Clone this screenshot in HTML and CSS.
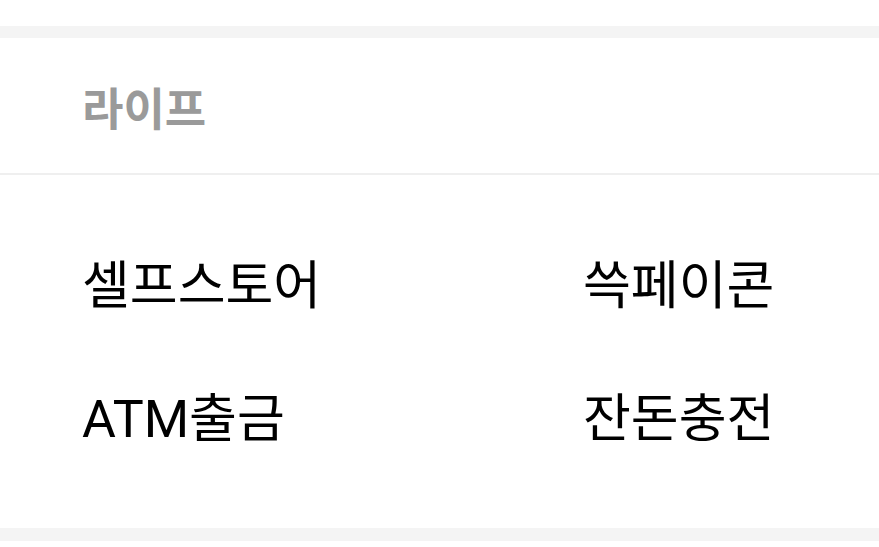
FILE: index.html
```html
<!DOCTYPE html>
<html lang="ko">
<head>
<meta charset="utf-8">
<link rel="stylesheet" href="styles.css">
</head>
<body>
<div class="top-space"></div>
<div class="gap"></div>
<section class="card">
  <header class="card-head">
    <h2 class="card-title">라이프</h2>
  </header>
  <div class="menu">
    <div class="menu-item">셀프스토어</div>
    <div class="menu-item">쓱페이콘</div>
    <div class="menu-item">ATM출금</div>
    <div class="menu-item">잔돈충전</div>
  </div>
</section>
<div class="gap gap-bottom"></div>
</body>
</html>
```

FILE: styles.css
```css
html, body {
  margin: 0;
  padding: 0;
  background: #ffffff;
  font-family: Roboto, "Noto Sans CJK KR", sans-serif;
}
.top-space {
  height: 26px;
}
.gap {
  height: 12px;
  background: #f4f4f4;
}
.gap-bottom {
  height: 13px;
}
.card {
  background: #ffffff;
}
.card-head {
  height: 137px;
  display: flex;
  align-items: center;
  padding: 0 0 0 82px;
  border-bottom: 2px solid #efefef;
  box-sizing: border-box;
}
.card-title {
  margin: 0;
  font-size: 45px;
  font-weight: 700;
  color: #9a9a9a;
  line-height: 1;
  padding-top: 9px;
}
.menu {
  display: grid;
  grid-template-columns: 501px 1fr;
  grid-auto-rows: 133px;
  padding: 43px 0 44px 82px;
}
.menu-item {
  display: flex;
  align-items: center;
  font-size: 52px;
  color: #000;
  line-height: 1;
  padding-top: 5px;
}
```
